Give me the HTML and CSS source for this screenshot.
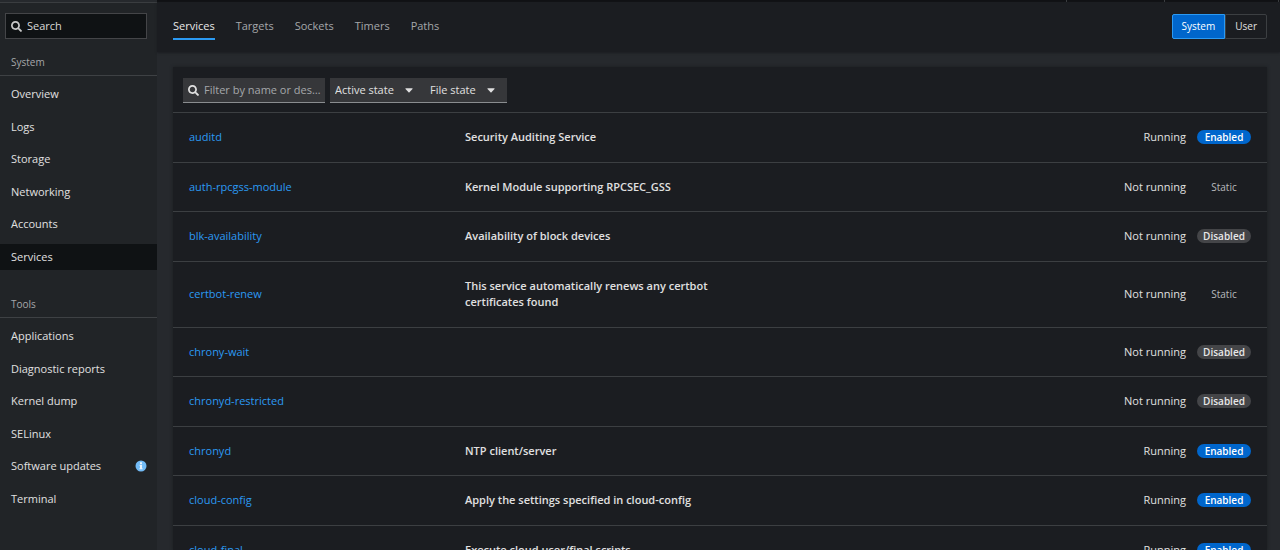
FILE: index.html
```html
<!DOCTYPE html>
<html lang="en">
<head>
<meta charset="utf-8">
<title>Services</title>
<link rel="stylesheet" href="styles.css">
</head>
<body>
<svg class="defs" aria-hidden="true">
  <symbol id="search" viewBox="0 0 512 512"><path d="M505 442.700 405.300 343c-4.500-4.500-10.600-7-17-7H372c27.600-35.300 44-79.700 44-128C416 93.100 322.900 0 208 0S0 93.100 0 208s93.100 208 208 208c48.300 0 92.700-16.400 128-44v16.300c0 6.400 2.500 12.500 7 17l99.700 99.700c9.400 9.400 24.600 9.400 33.900 0l28.300-28.300c9.400-9.400 9.400-24.600.1-34zM208 336c-70.700 0-128-57.200-128-128 0-70.700 57.200-128 128-128 70.700 0 128 57.200 128 128 0 70.700-57.200 128-128 128z"/></symbol>
  <symbol id="caret" viewBox="0 0 8 5"><path d="M.8.300h6.400q.7 0 .3.600L4.500 4.300q-.5.500-1 0L.5.900Q.1.300.8.300z"/></symbol>
</svg>
<div class="topbar"><span class="topbar-side"></span><span class="topbar-main"></span><span class="topbar-item"></span><span class="topbar-item"></span><span class="topbar-end"></span></div>
<div class="shell">
  <aside class="sidebar">
    <label class="side-search"><svg class="icon"><use href="#search"/></svg><input type="search" placeholder="Search" aria-label="Search"></label>
    <nav>
      <section class="group">
        <h2>System</h2>
        <ul>
          <li><a href="#">Overview</a></li>
          <li><a href="#">Logs</a></li>
          <li><a href="#">Storage</a></li>
          <li><a href="#">Networking</a></li>
          <li><a href="#">Accounts</a></li>
          <li><a href="#" class="current" aria-current="page">Services</a></li>
        </ul>
      </section>
      <section class="group">
        <h2>Tools</h2>
        <ul>
          <li><a href="#">Applications</a></li>
          <li><a href="#">Diagnostic reports</a></li>
          <li><a href="#">Kernel dump</a></li>
          <li><a href="#">SELinux</a></li>
          <li><a href="#">Software updates <svg class="info" viewBox="0 0 12 12"><circle cx="6" cy="6" r="5.500" fill="#73bcf7"/><path d="M5 2.300h2v1.600H5zM4.500 4.800H7v3.400h.6v1H4.400v-1H5V5.800h-.5z" fill="#e8f3fc"/></svg></a></li>
          <li><a href="#">Terminal</a></li>
        </ul>
      </section>
    </nav>
  </aside>
  <main>
    <header class="page-head">
      <nav class="tabs">
        <a href="#" class="active" aria-current="page">Services</a>
        <a href="#">Targets</a>
        <a href="#">Sockets</a>
        <a href="#">Timers</a>
        <a href="#">Paths</a>
      </nav>
      <div class="toggle" role="group" aria-label="Owner">
        <button type="button" class="on" aria-pressed="true">System</button><button type="button" aria-pressed="false">User</button>
      </div>
    </header>
    <section class="card">
      <div class="toolbar">
        <label class="filter"><svg class="icon"><use href="#search"/></svg><input type="text" placeholder="Filter by name or desc..." aria-label="Filter by name or description"></label>
        <div class="selects">
          <div class="select"><select aria-label="Active state"><option>Active state</option></select><svg class="caret"><use href="#caret"/></svg></div>
          <div class="select"><select aria-label="File state"><option>File state</option></select><svg class="caret"><use href="#caret"/></svg></div>
        </div>
      </div>
      <table>
        <colgroup><col class="c-name"><col class="c-desc"><col></colgroup>
        <tbody>
          <tr><th scope="row"><a href="#">auditd</a></th><td>Security Auditing Service</td><td><div class="state">Running<span class="badge enabled">Enabled</span></div></td></tr>
          <tr><th scope="row"><a href="#">auth-rpcgss-module</a></th><td>Kernel Module supporting RPCSEC_GSS</td><td><div class="state">Not running<span class="badge">Static</span></div></td></tr>
          <tr><th scope="row"><a href="#">blk-availability</a></th><td>Availability of block devices</td><td><div class="state">Not running<span class="badge disabled">Disabled</span></div></td></tr>
          <tr><th scope="row"><a href="#">certbot-renew</a></th><td>This service automatically renews any certbot certificates found</td><td><div class="state">Not running<span class="badge">Static</span></div></td></tr>
          <tr><th scope="row"><a href="#">chrony-wait</a></th><td></td><td><div class="state">Not running<span class="badge disabled">Disabled</span></div></td></tr>
          <tr><th scope="row"><a href="#">chronyd-restricted</a></th><td></td><td><div class="state">Not running<span class="badge disabled">Disabled</span></div></td></tr>
          <tr><th scope="row"><a href="#">chronyd</a></th><td>NTP client/server</td><td><div class="state">Running<span class="badge enabled">Enabled</span></div></td></tr>
          <tr><th scope="row"><a href="#">cloud-config</a></th><td>Apply the settings specified in cloud-config</td><td><div class="state">Running<span class="badge enabled">Enabled</span></div></td></tr>
          <tr><th scope="row"><a href="#">cloud-final</a></th><td>Execute cloud user/final scripts</td><td><div class="state">Running<span class="badge enabled">Enabled</span></div></td></tr>
        </tbody>
      </table>
    </section>
  </main>
</div>
</body>
</html>
```
FILE: styles.css
```css
* { box-sizing: border-box; }
body {
  margin: 0;
  height: 100vh;
  overflow: hidden;
  display: flex;
  flex-direction: column;
  background: #26292d;
  color: #e0e0e0;
  font: 11px/1.5 "Open Sans", "Noto Sans", sans-serif;
}
a { color: inherit; text-decoration: none; }
input, button, select { font: inherit; color: inherit; border-radius: 0; }
.defs { display: none; }
.icon { width: 11px; height: 11px; flex: none; fill: #e0e0e0; }

.topbar { display: flex; flex: none; height: 2px; background: #111215; }
.topbar-side { width: 157px; background: #26292d; }
.topbar-main { flex: 1; }
.topbar-item { width: 98px; border-left: 1px solid #3c3f42; }
.topbar-item + .topbar-item { width: 114px; }
.topbar-end { width: 2px; border-left: 1px solid #3c3f42; }

.shell { display: flex; flex: 1; min-height: 0; }
.sidebar { width: 157px; flex: none; background: #212427; border-top: 1px solid #3a3d40; }
.side-search {
  display: flex;
  align-items: center;
  gap: 5px;
  height: 26px;
  margin: 10px 10px 0 5px;
  padding: 0 5px;
  background: #0f1214;
  border: 1px solid #444548;
}
.side-search input, .filter input {
  flex: 1;
  min-width: 0;
  padding: 0;
  border: 0;
  outline: 0;
  background: none;
  text-overflow: ellipsis;
}
.side-search input::placeholder { color: #d8d8d8; opacity: 1; }
.side-search .icon { fill: #c8c8c8; }
.group h2 {
  margin: 0;
  padding: 15px 11px 5px;
  border-bottom: 1px solid #3e4144;
  color: #a5a7aa;
  font-size: 10px;
  font-weight: 400;
  line-height: 16px;
}
.group + .group { margin-top: 11px; }
.group ul { display: grid; gap: 6px; margin: 0; padding: 5px 0 0; list-style: none; }
.group a { display: flex; align-items: center; justify-content: space-between; padding: 5px 10px 5px 11px; }
.group a.current { background: #0f1214; }
.info { width: 12px; height: 12px; }

main { flex: 1; min-width: 0; display: flex; flex-direction: column; }
.page-head {
  display: flex;
  justify-content: space-between;
  align-items: flex-start;
  flex: none;
  height: 50px;
  padding: 12px 13px 0 16px;
  background: #1b1d21;
  box-shadow: 0 1px 2px #1b1d21;
}
.tabs { display: flex; gap: 21px; color: #a5a7aa; }
.tabs a { height: 26px; line-height: 24px; }
.tabs .active { color: #e8e8e8; border-bottom: 2px solid #2b9af3; }
.toggle { display: flex; }
.toggle button {
  height: 25px;
  padding: 0 9px;
  border: 1px solid #3c3f42;
  border-radius: 0 2px 2px 0;
  background: #1b1d21;
  font-size: 10px;
}
.toggle .on { border-color: #2b9af3; border-radius: 2px 0 0 2px; background: #06c; color: #fff; }

.card { flex: 1; min-height: 0; margin: 15px 13px 0 16px; background: #1b1d21; box-shadow: 0 0 3px #1b1d21; overflow: clip; overflow-clip-margin: 4px; }
.toolbar { display: flex; gap: 5px; padding: 11px 10px 9px; }
.filter { display: flex; align-items: center; gap: 5px; width: 142px; height: 25px; padding: 0 0 0 5px; background: #36373a; border-bottom: 1px solid #8a8d90; }
.filter input::placeholder { color: #a5a7aa; opacity: 1; }
.selects { display: flex; background: #36373a; }
.select { position: relative; height: 25px; border-bottom: 1px solid #8a8d90; }
.select select { appearance: none; width: 95px; height: 100%; padding: 0 5px; border: 0; background: none; }
.select + .select select { width: 82px; }
.caret { position: absolute; right: 12px; top: 10px; width: 8px; height: 5px; fill: #e0e0e0; pointer-events: none; }

table { width: 100%; table-layout: fixed; border-collapse: separate; border-spacing: 0; }
.c-name { width: 276px; }
.c-desc { width: 276px; }
th, td { padding: 16px; border-top: 1px solid #3c3f42; text-align: left; vertical-align: middle; font-weight: 600; }
th { font-weight: 400; color: #2b9af3; }
.state { display: flex; justify-content: flex-end; align-items: center; gap: 11px; font-weight: 400; }
.badge { width: 54px; border-radius: 8px; text-align: center; font-size: 10px; line-height: 14px; color: #b8babd; }
.enabled { background: #06c; color: #fff; font-weight: 600; }
.disabled { background: #444548; color: #e8e8e8; font-weight: 600; }
```
